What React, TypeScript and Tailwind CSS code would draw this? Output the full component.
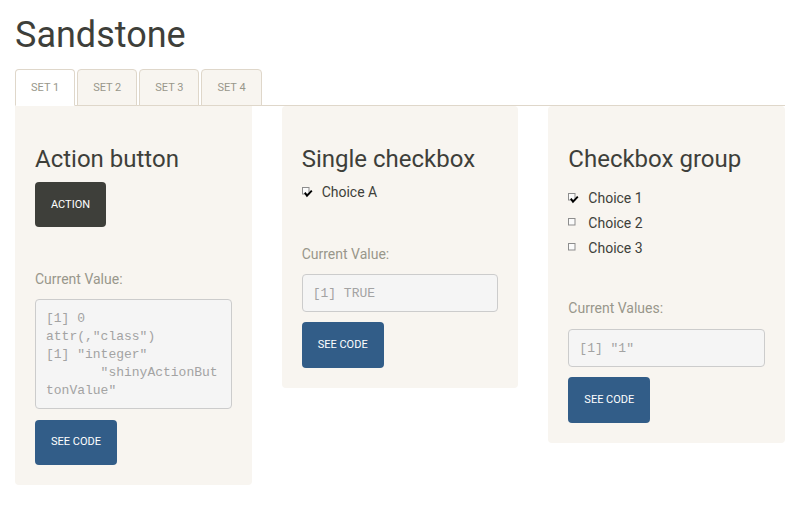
import React from "react";

const font = { fontFamily: "Roboto, 'Liberation Sans', sans-serif" };

function Box({ checked }: { checked?: boolean }) {
  return (
    <svg width="12" height="12" viewBox="0 0 12 12" className="mt-[5px] shrink-0">
      <rect x="0.5" y="0.5" width="6.5" height="6.5" fill="#fbfbfb" stroke="#8d8d8d" strokeWidth="1" />
      {checked && (
        <path d="M2.8 5.6 L5 8.8 L9.8 3.6" fill="none" stroke="#000" strokeWidth="1.9" strokeLinejoin="miter" />
      )}
    </svg>
  );
}

function Check({ label, checked }: { label: string; checked?: boolean }) {
  return (
    <div className="flex h-[20px] items-start">
      <Box checked={checked} />
      <span className="ml-[8px] text-[14px] leading-[20px] text-[#3e3f3a]">{label}</span>
    </div>
  );
}

function Pre({ lines }: { lines: string[] }) {
  return (
    <pre
      className="rounded-[4px] border border-[#cccccc] bg-[#f5f5f5] px-[10px] pt-[10px] pb-[8px] text-[13px] leading-[18px] text-[#a3a3a3] whitespace-pre"
      style={{ fontFamily: "'Liberation Mono', 'Courier New', monospace" }}
    >
      {lines.join("\n")}
    </pre>
  );
}

function SeeCode() {
  return (
    <div className="flex h-[45.5px] w-[82px] items-center justify-center rounded-[4px] bg-[#325d88] text-[11px] text-white">
      SEE CODE
    </div>
  );
}

function H3({ children }: { children: React.ReactNode }) {
  return <h3 className="mt-[20px] mb-[10px] text-[24px] leading-[1.1] text-[#3e3f3a]">{children}</h3>;
}

function Label({ children, className }: { children: React.ReactNode; className: string }) {
  return <div className={`h-[20px] text-[14px] leading-[20px] text-[#98978b] ${className}`}>{children}</div>;
}

const tabs = ["SET 1", "SET 2", "SET 3", "SET 4"];

export default function App() {
  return (
    <div className="min-h-[506px] w-[800px] bg-white px-[15px] pt-[16px]" style={font}>
      <h1 className="mb-[13px] text-[36px] leading-[1.1] text-[#3e3f3a]">Sandstone</h1>
      <div className="flex h-[37px] border-b border-[#dfd7ca]">
        {tabs.map((t, i) => (
          <div
            key={t}
            className={`mr-[2px] flex h-[37px] items-center rounded-t-[4px] border border-[#dfd7ca] px-[15px] pt-[3px] text-[11px] text-[#98978b] ${
              i === 0 ? "border-b-white bg-white" : "h-[36px] bg-[#f8f5f0]"
            }`}
          >
            {t}
          </div>
        ))}
      </div>
      <div className="grid grid-cols-3 items-start gap-[30px]">
        <div className="rounded-b-[4px] bg-[#f8f5f0] px-[20px] pt-[20px] pb-[20px]">
          <H3>Action button</H3>
          <div className="flex h-[45.5px] w-[71px] items-center justify-center rounded-[4px] bg-[#3e3f3a] pt-[1px] text-[11px] text-white">
            ACTION
          </div>
          <Label className="mt-[42px] mb-[10px]">Current Value:</Label>
          <Pre lines={["[1] 0", 'attr(,"class")', '[1] "integer"', '       "shinyActionBut', 'tonValue"']} />
          <div className="mt-[10.5px]">
            <SeeCode />
          </div>
        </div>
        <div className="rounded-[4px] bg-[#f8f5f0] px-[20px] pt-[20px] pb-[20px]">
          <H3>Single checkbox</H3>
          <Check label="Choice A" checked />
          <Label className="mt-[42px] mb-[10px]">Current Value:</Label>
          <Pre lines={["[1] TRUE"]} />
          <div className="mt-[10.5px]">
            <SeeCode />
          </div>
        </div>
        <div className="rounded-[4px] bg-[#f8f5f0] px-[20px] pt-[20px] pb-[20px]">
          <H3>Checkbox group</H3>
          <div className="flex flex-col gap-[5px] pt-[6px]">
            <Check label="Choice 1" checked />
            <Check label="Choice 2" />
            <Check label="Choice 3" />
          </div>
          <Label className="mt-[40.5px] mb-[10.5px]">Current Values:</Label>
          <Pre lines={['[1] "1"']} />
          <div className="mt-[10.5px]">
            <SeeCode />
          </div>
        </div>
      </div>
    </div>
  );
}
